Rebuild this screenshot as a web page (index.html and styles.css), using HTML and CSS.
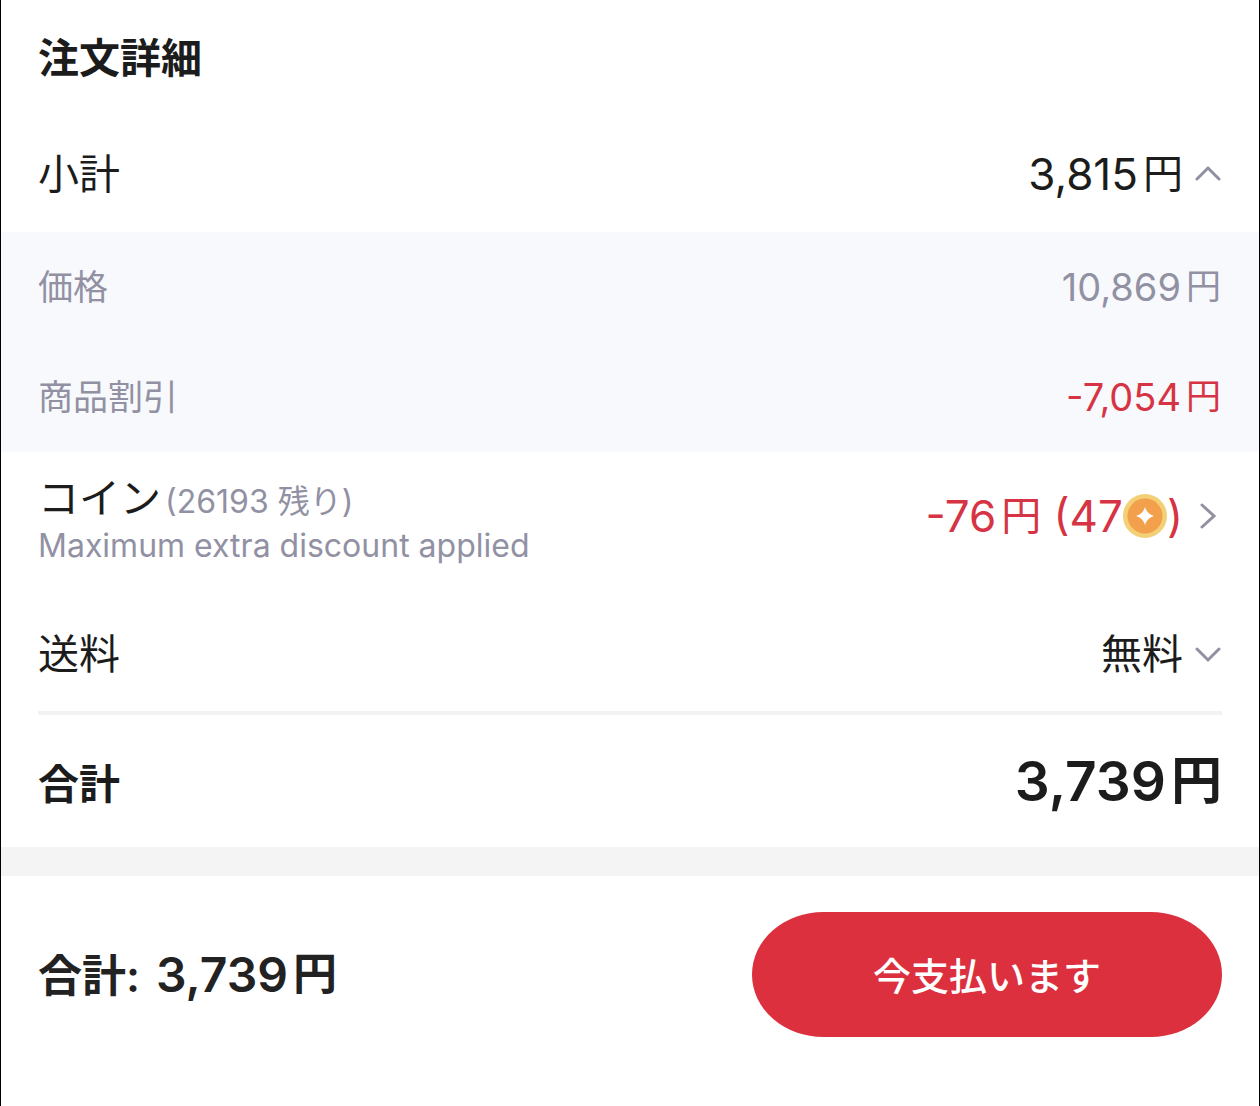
FILE: index.html
```html
<!DOCTYPE html>
<html lang="ja">
<head>
    <meta charset="UTF-8">
    <meta name="viewport" content="width=device-width, initial-scale=1.0">
    <title>注文詳細</title>
    <link rel="stylesheet" href="styles.css">
</head>
<body>
    <main class="order">
        <h1 class="title">注文詳細</h1>

        <button class="row subtotal" type="button" aria-expanded="true">
            <span class="label">小計</span>
            <span class="value"><span class="amount">3,815<span class="yen">円</span></span>
                <svg class="arrow" viewBox="0 0 26 26"><path d="M2 18 L13 7 L24 18"/></svg>
            </span>
        </button>

        <!-- 小計の内訳 -->
        <div class="breakdown">
            <div class="row small">
                <span>価格</span>
                <span class="amount">10,869<span class="yen">円</span></span>
            </div>
            <div class="row small">
                <span>商品割引</span>
                <span class="amount red">-7,054<span class="yen">円</span></span>
            </div>
        </div>

        <button class="row coins" type="button">
            <span class="coin-info">
                <span class="coin-title"><span class="label">コイン</span><span class="remaining">(26193 残り)</span></span>
                <span class="note">Maximum extra discount applied</span>
            </span>
            <span class="value">
                <span class="coin-amount red">-76<span class="yen">円</span> (47<svg class="coin" viewBox="0 0 44 44"><circle cx="22" cy="22" r="22" fill="#f3cf75"/><circle cx="22" cy="22" r="17.500" fill="#f2a04c"/><path d="M22 13 Q24 20 31 22 Q24 24 22 31 Q20 24 13 22 Q20 20 22 13Z" fill="#fff"/></svg>)</span>
                <svg class="arrow" viewBox="0 0 26 26"><path d="M7 2 L19 13 L7 24"/></svg>
            </span>
        </button>

        <button class="row shipping" type="button" aria-expanded="false">
            <span class="label">送料</span>
            <span class="value"><span class="label">無料</span>
                <svg class="arrow" viewBox="0 0 26 26"><path d="M2 8 L13 19 L24 8"/></svg>
            </span>
        </button>

        <div class="row total">
            <span class="total-label">合計</span>
            <span class="total-amount">3,739<span class="yen">円</span></span>
        </div>

        <footer class="pay-bar">
            <p class="pay-total"><span>合計:</span><span class="pay-amount">3,739<span class="yen">円</span></span></p>
            <button class="pay-button" type="button">今支払います</button>
        </footer>
    </main>
</body>
</html>
```
FILE: styles.css
```css
* {
    box-sizing: border-box;
}

body {
    margin: 0;
    background-color: #fff;
    color: #1c1c1c;
    font-family: Inter, "Noto Sans CJK JP", sans-serif;
}

button {
    border: none;
    background: none;
    color: inherit;
    font-family: inherit;
    cursor: pointer;
}

.order {
    min-height: 100vh;
    border-left: 1px solid #000;
    border-right: 1px solid #000;
}

.title {
    margin: 0;
    padding: 28px 37px 0;
    font-size: 41px;
    line-height: 60px;
    font-weight: 700;
}

.row {
    display: flex;
    justify-content: space-between;
    align-items: center;
    width: 100%;
    padding: 0 38px 0 37px;
    text-align: left;
}

.value {
    display: flex;
    align-items: center;
    gap: 12px;
}

.label {
    font-size: 41px;
    line-height: 60px;
}

.amount,
.total-amount,
.pay-total {
    white-space: nowrap;
}

.yen {
    margin-left: 5px;
    font-size: 40px;
    line-height: 1;
    vertical-align: 2px;
}

.arrow {
    width: 26px;
    height: 26px;
    fill: none;
    stroke: #9191a3;
    stroke-width: 3;
    stroke-linecap: round;
}

.subtotal {
    height: 116px;
    margin-top: 28px;
    font-size: 44px;
}

.breakdown {
    background-color: #f8f9fc;
    color: #9191a3;
}

.small {
    height: 110px;
    font-size: 35px;
    line-height: 50px;
}

.small .amount {
    font-size: 38px;
}

.small .yen {
    font-size: 35px;
}

.red,
.small .red {
    color: #d63444;
}

.coins {
    height: 132px;
    padding-bottom: 4px;
}

.coin-info {
    display: flex;
    flex-direction: column;
}

.coin-title {
    display: flex;
    align-items: baseline;
    gap: 4px;
}

.remaining,
.note {
    color: #9191a3;
    font-size: 32px;
    line-height: 36px;
}

.coin-amount {
    display: flex;
    align-items: center;
    font-size: 44px;
    white-space: pre;
}

.coin {
    width: 44px;
    height: 44px;
}

.shipping {
    height: 127px;
    padding-top: 12px;
}

.total {
    width: auto;
    height: 136px;
    margin: 0 37px;
    padding: 0;
    border-top: 4px solid #f3f3f3;
    font-weight: 600;
}

.total-label {
    font-size: 41px;
}

.total-amount {
    font-size: 55px;
}

.total-amount .yen {
    font-size: 51px;
}

.pay-bar {
    display: flex;
    justify-content: space-between;
    align-items: center;
    padding: 36px 37px;
    border-top: 29px solid #f4f4f4;
}

.pay-total {
    display: flex;
    align-items: baseline;
    gap: 16px;
    margin: 0;
    padding-bottom: 4px;
    color: #222;
    font-size: 44px;
    font-weight: 600;
}

.pay-amount {
    font-size: 48px;
}

.pay-amount .yen {
    font-size: 44px;
}

.pay-button {
    width: 470px;
    height: 125px;
    padding-bottom: 4px;
    border-radius: 72px / 63px;
    background-color: #dc303e;
    color: #fff;
    font-size: 38px;
    font-weight: 500;
}
```
